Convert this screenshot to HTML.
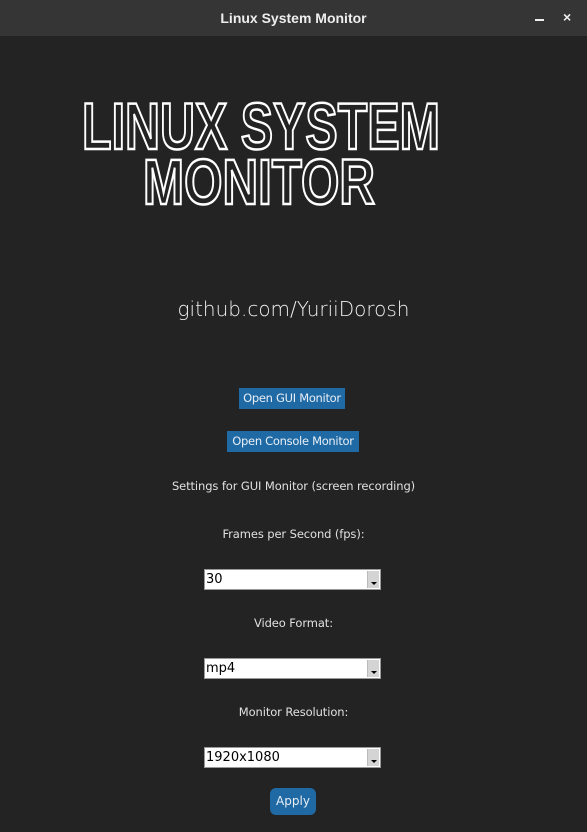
<html><head><style>
body{margin:0;width:587px;height:832px;background:#232323;font-family:"DejaVu Sans","Liberation Sans",sans-serif;color:#e6e6e6;position:relative;overflow:hidden}
.tb{position:absolute;left:0;top:0;width:587px;height:36px;background:#353535;text-align:center;font:bold 14px "Liberation Sans",sans-serif;line-height:36px;color:#eee}
.a{position:absolute;white-space:nowrap}
.btn{position:absolute;background:#1f6aa5;color:#e8eef5;font-size:11.5px;height:21px;line-height:21px;text-align:center;white-space:nowrap;letter-spacing:-0.3px}
.lbl{position:absolute;width:587px;text-align:center;font-size:11.5px;color:#e0e0e0;white-space:nowrap;letter-spacing:-0.1px}
.cb{position:absolute;left:204px;width:177px;height:21px;background:#fff;border:1px solid #999;color:#000;font-size:13px;line-height:20px;box-sizing:border-box;padding-left:1px}
.cb i{position:absolute;right:1px;top:1px;width:11px;height:17px;background:#d4d4d4;border-left:1px solid #bbb}
.cb i:after{content:"";position:absolute;left:3px;bottom:3px;border:3px solid transparent;border-top:3px solid #000;border-bottom:0}
</style></head><body>
<div class="tb">Linux System Monitor</div>
<div class="a" style="left:535px;top:19px;width:9px;height:2px;background:#eee"></div>
<div class="a" style="left:563px;top:9px;font:bold 14px 'Liberation Sans';color:#eee">×</div>
<svg class="a" style="left:0;top:36px" width="587" height="200">
<g font-family="Liberation Sans,sans-serif" font-weight="bold" fill="#232323" stroke="#fff" stroke-width="2.5">
<text x="82" y="113" font-size="66" textLength="358" lengthAdjust="spacingAndGlyphs">LINUX SYSTEM</text>
<text x="143" y="168" font-size="64" textLength="232" lengthAdjust="spacingAndGlyphs">MONITOR</text>
</g></svg>
<div class="lbl" style="top:297px;font-size:20px;color:#f0f0f0;font-family:'DejaVu Sans',sans-serif;font-weight:300;letter-spacing:0">github.com/YuriiDorosh</div>
<div class="btn" style="left:239px;top:388px;width:106px">Open GUI Monitor</div>
<div class="btn" style="left:227px;top:431px;width:132px">Open Console Monitor</div>
<div class="lbl" style="top:479px">Settings for GUI Monitor (screen recording)</div>
<div class="lbl" style="top:527px">Frames per Second (fps):</div>
<div class="cb" style="top:569px">30<i></i></div>
<div class="lbl" style="top:616px">Video Format:</div>
<div class="cb" style="top:658px">mp4<i></i></div>
<div class="lbl" style="top:705px">Monitor Resolution:</div>
<div class="cb" style="top:747px">1920x1080<i></i></div>
<div class="btn" style="left:270px;top:788px;width:46px;height:27px;line-height:27px;border-radius:6px;font-size:12px;letter-spacing:0">Apply</div>
</body></html>
